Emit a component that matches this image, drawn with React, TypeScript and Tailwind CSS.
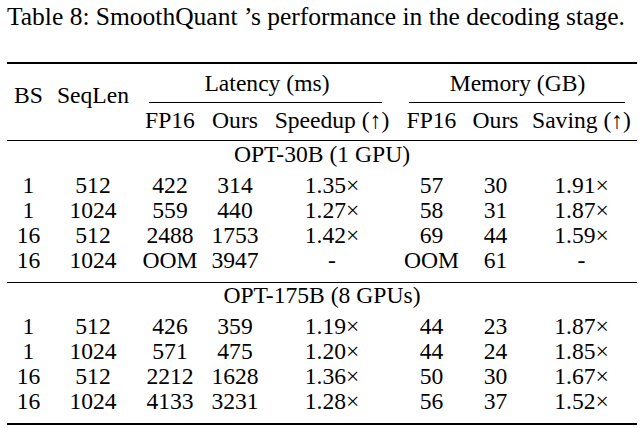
const cols = 'grid grid-cols-[43px_86px_68px_62px_132px_67px_61px_111px]'

type Row = string[]

const groups: { title: string; rows: Row[] }[] = [
  {
    title: 'OPT-30B (1 GPU)',
    rows: [
      ['1', '512', '422', '314', '1.35×', '57', '30', '1.91×'],
      ['1', '1024', '559', '440', '1.27×', '58', '31', '1.87×'],
      ['16', '512', '2488', '1753', '1.42×', '69', '44', '1.59×'],
      ['16', '1024', 'OOM', '3947', '-', 'OOM', '61', '-'],
    ],
  },
  {
    title: 'OPT-175B (8 GPUs)',
    rows: [
      ['1', '512', '426', '359', '1.19×', '44', '23', '1.87×'],
      ['1', '1024', '571', '475', '1.20×', '44', '24', '1.85×'],
      ['16', '512', '2212', '1628', '1.36×', '50', '30', '1.67×'],
      ['16', '1024', '4133', '3231', '1.28×', '56', '37', '1.52×'],
    ],
  },
]

function DataRow({ row }: { row: Row }) {
  return (
    <div className={`${cols} h-[25px]`}>
      {row.map((cell, i) => (
        <div key={i} className="text-center">
          {cell}
        </div>
      ))}
    </div>
  )
}

export default function App() {
  return (
    <div className="w-[643px] h-[428px] bg-white text-black font-['Liberation_Serif','Times_New_Roman',serif] overflow-hidden">
      <p className="pl-[7px] pt-[2px] text-[25.5px] leading-[30px] whitespace-nowrap">
        Table 8: SmoothQuant &rsquo;s performance in the decoding stage.
      </p>

      <div className="ml-[7px] mt-[30px] w-[630px] text-[23.6px] leading-[25px] whitespace-nowrap">
        <div className="h-[2px] bg-black" />

        {/* header */}
        <div className={`${cols} pt-[6.5px]`}>
          <div className="row-span-2 pt-[12px] text-center">BS</div>
          <div className="row-span-2 pt-[12px] text-center">SeqLen</div>
          <div className="col-span-3 text-center">
            Latency (ms)
            <div className="h-px bg-black ml-[13px] mr-[16px] mt-[6.5px]" />
          </div>
          <div className="col-span-3 text-center">
            Memory (GB)
            <div className="h-px bg-black ml-[11px] mr-[12px] mt-[6.5px]" />
          </div>
          <div className="pt-[4.5px] text-center">FP16</div>
          <div className="pt-[4.5px] text-center">Ours</div>
          <div className="pt-[4.5px] text-center">Speedup (↑)</div>
          <div className="pt-[4.5px] text-center">FP16</div>
          <div className="pt-[4.5px] text-center">Ours</div>
          <div className="pt-[4.5px] text-center">Saving (↑)</div>
        </div>

        {groups.map((g, gi) => (
          <div key={g.title} className={gi === 0 ? 'mt-[7.5px]' : 'mt-[9px]'}>
            <div className="h-px bg-black" />
            <div className="text-center mt-[0.5px] mb-[6px]">{g.title}</div>
            {g.rows.map((r, ri) => (
              <DataRow key={ri} row={r} />
            ))}
          </div>
        ))}

        <div className="mt-[9px] h-[2px] bg-black" />
      </div>
    </div>
  )
}
